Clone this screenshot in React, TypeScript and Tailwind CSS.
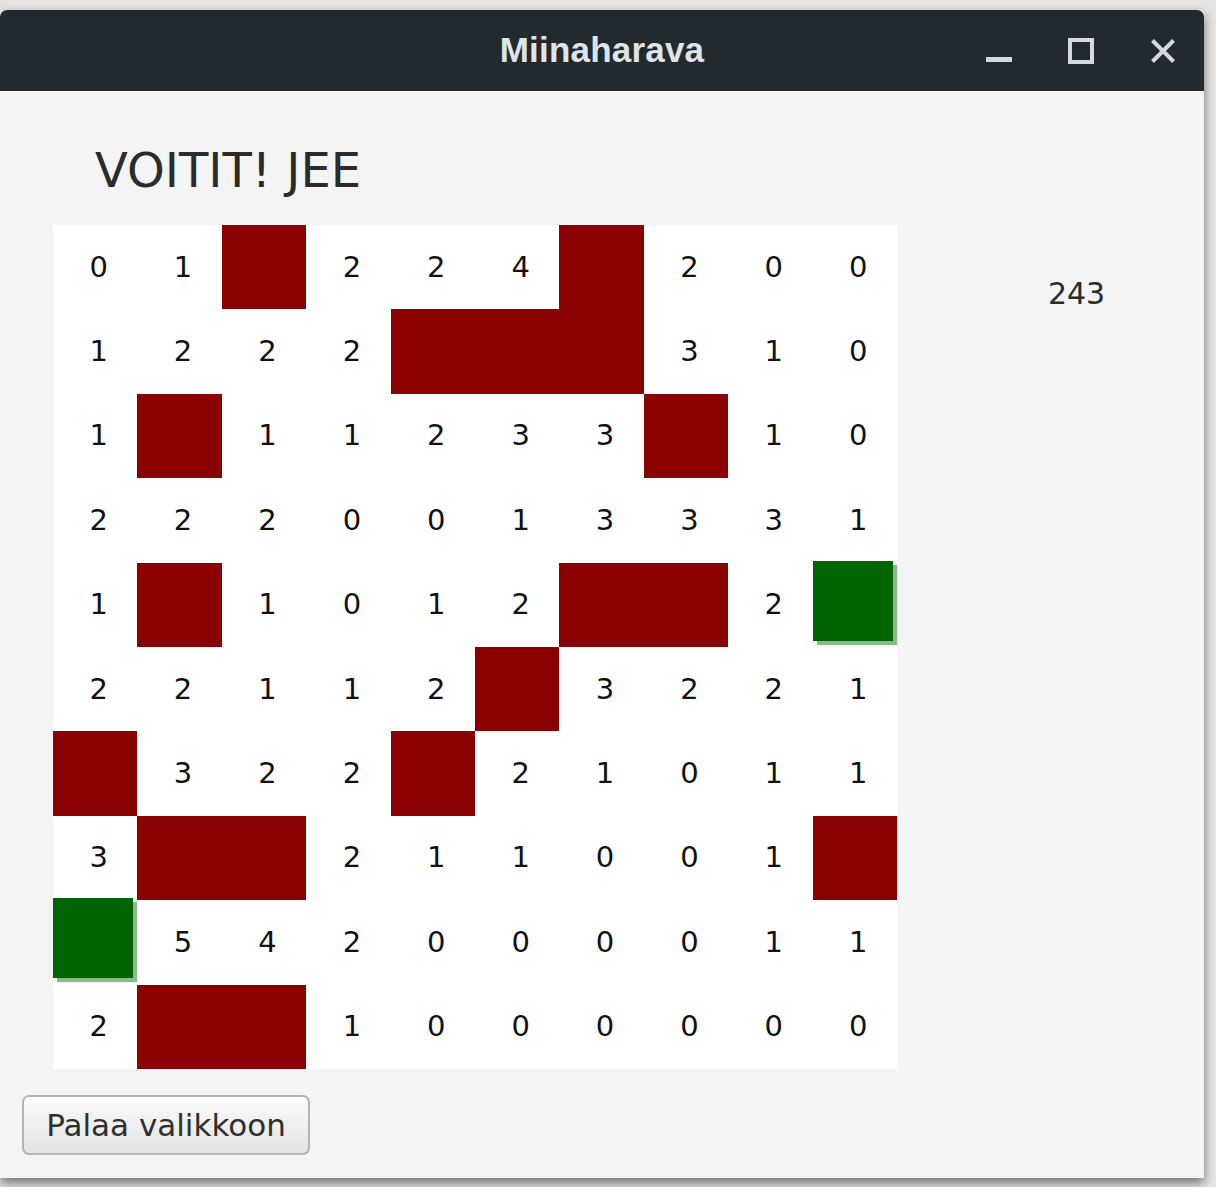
type Cell = number | "M" | "G";

const board: Cell[][] = [
  [0, 1, "M", 2, 2, 4, "M", 2, 0, 0],
  [1, 2, 2, 2, "M", "M", "M", 3, 1, 0],
  [1, "M", 1, 1, 2, 3, 3, "M", 1, 0],
  [2, 2, 2, 0, 0, 1, 3, 3, 3, 1],
  [1, "M", 1, 0, 1, 2, "M", "M", 2, "G"],
  [2, 2, 1, 1, 2, "M", 3, 2, 2, 1],
  ["M", 3, 2, 2, "M", 2, 1, 0, 1, 1],
  [3, "M", "M", 2, 1, 1, 0, 0, 1, "M"],
  ["G", 5, 4, 2, 0, 0, 0, 0, 1, 1],
  [2, "M", "M", 1, 0, 0, 0, 0, 0, 0],
];

function BoardCell({ value }: { value: Cell }) {
  if (value === "M") {
    return <div className="h-[84.4px] bg-[#8b0000]" />;
  }
  if (value === "G") {
    return (
      <div className="h-[84.4px]">
        <div className="-mt-[2px] h-[80px] w-[80px] bg-[#006400] shadow-[4px_4px_1px_rgba(0,100,0,0.45)]" />
      </div>
    );
  }
  return (
    <div className="flex h-[84.4px] items-center justify-center pl-[7px] text-[29px] leading-none text-[#111]">
      {value}
    </div>
  );
}

function TitleBar() {
  return (
    <header className="grid h-[81px] shrink-0 grid-cols-[1fr_auto_1fr] items-center rounded-t-[7px] bg-[#222a2f]">
      <div />
      <h1 className="font-['Liberation_Sans',sans-serif] text-[35px] font-bold tracking-[0.2px] text-[#dfe4e8]">
        Miinaharava
      </h1>
      <div className="flex items-center justify-end gap-[56px] pr-[28px] text-[#d3d9dd]">
        <svg width="26" height="26" viewBox="0 0 26 26">
          <rect x="0" y="19" width="26" height="5" fill="currentColor" />
        </svg>
        <svg width="26" height="26" viewBox="0 0 26 26">
          <rect x="2" y="2" width="22" height="22" fill="none" stroke="currentColor" strokeWidth="4" />
        </svg>
        <svg width="26" height="26" viewBox="0 0 26 26">
          <path d="M2.5 2.5 L23.5 23.5 M23.5 2.5 L2.5 23.5" stroke="currentColor" strokeWidth="4" />
        </svg>
      </div>
    </header>
  );
}

export default function App() {
  return (
    <div className="h-[1187px] w-[1216px] overflow-hidden bg-[#e4e4e4] pt-[10px] font-['DejaVu_Sans',sans-serif]">
      <div className="flex h-[1168px] w-[1204px] flex-col shadow-[0_5px_10px_rgba(0,0,0,0.5)]">
        <TitleBar />

        <main className="flex flex-1 bg-[#f4f4f4]">
          <div className="flex flex-col">
            <h2 className="pl-[95px] pt-[55px] text-[48px] leading-none text-[#2b2b2b]">VOITIT! JEE</h2>

            <div className="ml-[53px] mt-[31px] grid grid-cols-[repeat(10,84.4px)] bg-white">
              {board.map((row, r) =>
                row.map((value, c) => <BoardCell key={`${r}-${c}`} value={value} />)
              )}
            </div>

            <div className="ml-[22px] mt-[26px]">
              <button className="h-[60px] w-[288px] rounded-[7px] border-2 border-[#b4b4b4] bg-gradient-to-b from-[#fbfbfb] to-[#e3e3e3] text-[31px] text-[#2f2f2f]">
                Palaa valikkoon
              </button>
            </div>
          </div>

          <div className="ml-[151px] pt-[188px] text-[30px] leading-none text-[#2b2b2b]">243</div>
        </main>
      </div>
    </div>
  );
}
